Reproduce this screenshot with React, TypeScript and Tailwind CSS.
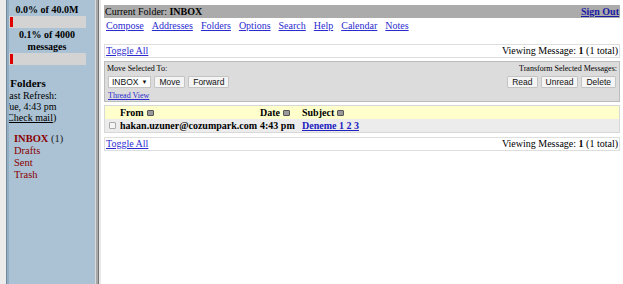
const serif = "font-['Liberation_Serif','Times_New_Roman',serif]"
const sans = "font-['Liberation_Sans',Arial,sans-serif]"

function QuotaBar() {
  return (
    <div className="h-[12px] w-full bg-[#d3d3d3] py-[1px] pl-[2px]">
      <div className="h-full w-[3px] bg-[#e00000]" />
    </div>
  )
}

function SortIcon() {
  return (
    <span className="ml-[3px] inline-block h-[6px] w-[7px] rounded-[1px] border border-[#555] bg-[#9a9a9a] align-middle" />
  )
}

function Btn({ children }: { children: React.ReactNode }) {
  return (
    <span
      className={`${sans} flex h-[12px] items-center rounded-[1px] border border-[#c4c4c4] bg-[#f4f4f4] px-[4px] text-[8.5px] leading-none text-[#111]`}
    >
      {children}
    </span>
  )
}

export default function App() {
  const links = ["Compose", "Addresses", "Folders", "Options", "Search", "Help", "Calendar", "Notes"]

  return (
    <div className={`${serif} flex h-[284px] w-[623px] overflow-hidden bg-white text-[10px] text-black`}>
      {/* left frame */}
      <div className="flex h-full w-[95px] shrink-0">
        <div className="w-[6px] bg-[#ebebeb]" />
        <div className="w-[1px] bg-[#6d8aa3]" />
        <div className="w-[2px] bg-[#93adc2]" />
        <div className="flex-1 overflow-hidden bg-[#aac2d4]">
          <div className="ml-[-1px] w-[78px] pt-[4px] text-center font-bold leading-[12px]">
            <div>0.0% of 40.0M</div>
            <QuotaBar />
            <div className="mt-[1px]">0.1% of 4000</div>
            <div>messages</div>
            <QuotaBar />
          </div>

          <div className="mt-[12px] flex w-[38px] flex-col items-center">
            <div className="whitespace-nowrap text-[11px] font-bold leading-[13px]">Folders</div>
          </div>
          <div className="flex w-[42px] flex-col items-center text-[10px] leading-[11px]">
            <div className="whitespace-nowrap">Last Refresh:</div>
            <div className="whitespace-nowrap">Tue, 4:43 pm</div>
            <div className="whitespace-nowrap">
              (<span className="underline">Check mail</span>)
            </div>
          </div>

          <div className="mt-[10px] flex flex-col pl-[5px] text-[10.5px] leading-[12px] text-[#8b0000]">
            <div>
              <span className="font-bold">INBOX</span> <span className="text-[#222]">(1)</span>
            </div>
            <div>Drafts</div>
            <div>Sent</div>
            <div>Trash</div>
          </div>
        </div>
      </div>

      {/* frame separator */}
      <div className="w-[1px] bg-[#dadada]" />
      <div className="w-[2px] bg-[#a8a8a8]" />
      <div className="w-[1px] bg-[#747474]" />
      <div className="w-[2px] bg-[#e8e8e8]" />

      {/* main frame */}
      <div className="flex flex-1 flex-col px-[3px] pt-[5px]">
        <div className="flex h-[13px] items-center justify-between bg-[#ababab] px-[1px] leading-none">
          <span>
            Current Folder: <b>INBOX</b>
          </span>
          <span className="font-bold text-[#1a1aa6] underline">Sign Out</span>
        </div>

        <div className="mt-[1px] flex h-[14px] items-center gap-[8px] pl-[2px] leading-none text-[#2b2bd0]">
          {links.map((l) => (
            <span key={l} className="underline">
              {l}
            </span>
          ))}
        </div>

        <div className="mt-[11px] flex h-[14px] items-center justify-between border border-[#dedede] px-[1px] leading-none">
          <span className="text-[#2b2bd0] underline">Toggle All</span>
          <span>
            Viewing Message: <b>1</b> (1 total)
          </span>
        </div>

        <div className="mt-[3px] flex h-[41px] justify-between border border-[#bcbcbc] bg-[#dcdcdc] px-[2px] pt-[2px] text-[8px]">
          <div className="flex flex-col">
            <div className="h-[10px] leading-[10px]">Move Selected To:</div>
            <div className="mt-[2px] flex gap-[3px] pl-[1px]">
              <span
                className={`${sans} flex h-[12px] items-center gap-[3px] border border-[#c4c4c4] bg-white px-[3px] text-[8.5px] leading-none text-[#111]`}
              >
                INBOX <span className="text-[6px]">▼</span>
              </span>
              <Btn>Move</Btn>
              <Btn>Forward</Btn>
            </div>
            <div className="mt-[3px] h-[10px] pl-[1px] leading-[10px] text-[#2b2bd0] underline">Thread View</div>
          </div>
          <div className="flex flex-col items-end">
            <div className="h-[10px] leading-[10px]">Transform Selected Messages:</div>
            <div className="mt-[2px] flex gap-[3px] pr-[1px]">
              <Btn>Read</Btn>
              <Btn>Unread</Btn>
              <Btn>Delete</Btn>
            </div>
          </div>
        </div>

        <div className="mt-[3px] border border-[#d8d8d8] font-bold leading-none">
          <div className="grid h-[13px] grid-cols-[15px_140px_42px_1fr] items-center bg-[#ffffcc]">
            <span />
            <span>
              From
              <SortIcon />
            </span>
            <span>
              Date
              <SortIcon />
            </span>
            <span>
              Subject
              <SortIcon />
            </span>
          </div>
          <div className="grid h-[13px] grid-cols-[15px_140px_42px_1fr] items-center bg-[#ececec]">
            <span className="ml-[4px] h-[7px] w-[7px] rounded-[1px] border border-[#aaa] bg-[#f4f4f4]" />
            <span>hakan.uzuner@cozumpark.com</span>
            <span>4:43 pm</span>
            <span className="text-[#2020c0] underline">Deneme 1 2 3</span>
          </div>
        </div>

        <div className="mt-[4px] flex h-[14px] items-center justify-between border border-[#dedede] px-[1px] leading-none">
          <span className="text-[#2b2bd0] underline">Toggle All</span>
          <span>
            Viewing Message: <b>1</b> (1 total)
          </span>
        </div>
      </div>
    </div>
  )
}
